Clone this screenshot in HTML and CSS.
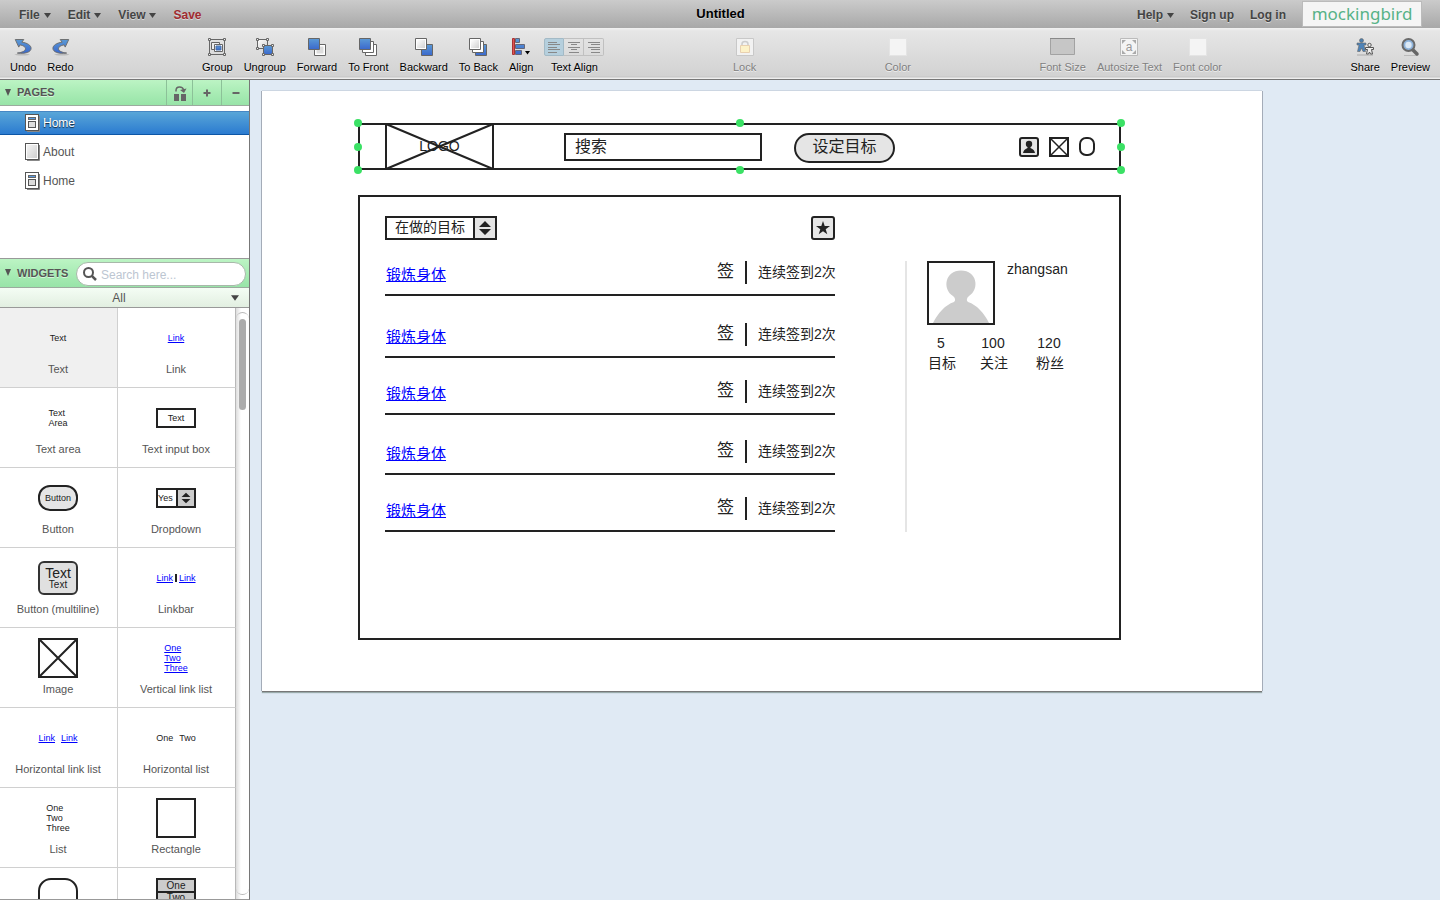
FILE: index.html
```html
<!DOCTYPE html>
<html lang="en">
<head>
<meta charset="utf-8">
<title>Untitled</title>
<link rel="stylesheet" href="styles.css">
</head>
<body>
<svg class="defs" width="0" height="0" aria-hidden="true">
  <defs>
    <linearGradient id="blue" x1="0" y1="0" x2="0" y2="1"><stop offset="0" stop-color="#5b9ad6"/><stop offset="1" stop-color="#3a68cc"/></linearGradient>
    <linearGradient id="pale" x1="0" y1="0" x2="1" y2="1"><stop offset="0" stop-color="#fff"/><stop offset="1" stop-color="#d2d2d2"/></linearGradient>
    <linearGradient id="sheet" x1="0" y1="0" x2="1" y2="1"><stop offset="0" stop-color="#f4f4f4"/><stop offset="1" stop-color="#cfcfcf"/></linearGradient>
  </defs>
  <symbol id="undo" viewBox="0 0 19 19">
    <ellipse cx="8" cy="17.5" rx="8" ry="1" fill="#999" opacity=".5"/>
    <path d="M.8 1.6H9.8L7.8 4.4C13.6 5.2 17.5 7.8 17.5 10.9 17.5 14.8 11.5 17 3 15.9 8.6 15.2 11.6 13.6 11.6 11.2 11.6 9.4 9.4 8 5.8 7.2L4.5 9.6Z" fill="url(#blue)" stroke="#6b6b6b" stroke-width="1"/>
  </symbol>
  <symbol id="page-filled" viewBox="0 0 16 18">
    <path d="M14.5 2V17.5H2" fill="none" stroke="#888" stroke-width="1"/>
    <rect x=".5" y=".5" width="13" height="16" fill="#fff" stroke="#555"/>
    <rect x="3" y="3" width="8" height="3" fill="#666"/><rect x="4" y="4" width="6" height="1" fill="#5b9ae0"/>
    <rect x="3.5" y="7.5" width="7" height="6" fill="#ddd" stroke="#555"/>
  </symbol>
  <symbol id="page-blank" viewBox="0 0 16 18">
    <path d="M14.5 2V17.5H2" fill="none" stroke="#888" stroke-width="1"/>
    <rect x=".5" y=".5" width="13" height="16" fill="#fff" stroke="#555"/>
    <rect x="2" y="2" width="10" height="13" fill="url(#sheet)"/>
  </symbol>
  <symbol id="caret" viewBox="0 0 7 5"><path d="M0 0H7L3.5 5Z"/></symbol>
  <symbol id="twist" viewBox="0 0 6 7"><path d="M0 0H6L3 7Z"/></symbol>
</svg>

<header class="menubar">
  <nav class="menus">
    <button class="menu">File<svg class="caret"><use href="#caret"/></svg></button>
    <button class="menu">Edit<svg class="caret"><use href="#caret"/></svg></button>
    <button class="menu">View<svg class="caret"><use href="#caret"/></svg></button>
    <button class="menu save">Save</button>
  </nav>
  <h1 class="doc-title">Untitled</h1>
  <nav class="account">
    <button class="menu">Help<svg class="caret"><use href="#caret"/></svg></button>
    <a class="menu" href="#">Sign up</a>
    <a class="menu" href="#">Log in</a>
    <a class="brand" href="#">mockingbird</a>
  </nav>
</header>

<div class="toolbar">
  <div class="tools">
    <button class="tool"><svg width="19" height="19"><use href="#undo"/></svg>Undo</button>
    <button class="tool"><svg width="19" height="19" viewBox="0 0 19 19"><g transform="translate(19 0) scale(-1 1)"><use href="#undo" width="19" height="19"/></g></svg>Redo</button>
  </div>
  <div class="tools">
    <button class="tool"><svg width="18" height="18" viewBox="0 0 18 18" fill="none" stroke="#666"><path d="M1.500 1.500H16.500V16.500H1.500Z"/><g fill="#eee"><path d="M.5 .5h2v2h-2zM15.500 .5h2v2h-2zM.5 15.500h2v2h-2zM15.500 15.500h2v2h-2z"/><path d="M3.500 4.500h8v7h-8z"/></g><path d="M6.500 6.500h8v7h-8z" fill="#fff"/><path d="M8 8h5v4H8z" fill="url(#blue)" stroke="#4a6ea8"/></svg>Group</button>
    <button class="tool"><svg width="18" height="18" viewBox="0 0 18 18" fill="none" stroke="#666"><path d="M1.500 1.500H11.500V10.500H1.500Z" fill="url(#pale)"/><path d="M7.500 7.500H16.500V16.500H7.500Z" fill="url(#blue)"/><path fill="#eee" d="M.5 .5h2v2h-2zM10.500 .5h2v2h-2zM.5 9.500h2v2h-2zM6.500 6.500h2v2h-2zM15.500 6.500h2v2h-2zM6.500 15.500h2v2h-2zM15.500 15.500h2v2h-2z"/></svg>Ungroup</button>
    <button class="tool"><svg width="18" height="18" viewBox="0 0 18 18" stroke="#666"><path d="M6.500 6.500h11v11h-11z" fill="#fff"/><path d="M8.500 8.500h7v7h-7z" fill="#ddd" stroke="none"/><path d="M.5 .5h11v11H.5z" fill="url(#blue)"/></svg>Forward</button>
    <button class="tool"><svg width="18" height="18" viewBox="0 0 18 18" stroke="#666"><path d="M6.500 6.500h11v11h-11z" fill="#fff"/><path d="M3.500 3.500h11v11h-11z" fill="#fff"/><path d="M.5 .5h11v11H.5z" fill="url(#blue)"/></svg>To Front</button>
    <button class="tool"><svg width="18" height="18" viewBox="0 0 18 18" stroke="#666"><path d="M6.500 6.500h11v11h-11z" fill="url(#blue)"/><path d="M.5 .5h11v11H.5z" fill="#fff"/><path d="M2 2h8v8H2z" fill="url(#pale)" stroke="none"/></svg>Backward</button>
    <button class="tool"><svg width="18" height="18" viewBox="0 0 18 18" stroke="#666"><path d="M6.500 6.500h11v11h-11z" fill="url(#blue)"/><path d="M3.500 3.500h11v11h-11z" fill="#fff"/><path d="M.5 .5h11v11H.5z" fill="#fff"/><path d="M2 2h8v8H2z" fill="url(#pale)" stroke="none"/></svg>To Back</button>
    <button class="tool"><svg width="18" height="18" viewBox="0 0 18 18"><g fill="url(#blue)" stroke="#667"><path d="M3.500 .5h4v4h-4zM3.500 6.500h9v4h-9zM3.500 12.500h6v4h-6z"/></g><path d="M.5 .5h2v16h-2z" fill="#d55" stroke="#a33"/><path d="M13 13h5l-2.500 3.500z"/></svg>Align</button>
    <div class="tool" role="group" aria-labelledby="text-align">
      <div class="segments">
        <button class="segment on" aria-label="Left"><svg width="12" height="11" viewBox="0 0 12 11"><path d="M0 .5h9M0 2.500h12M0 5.500h9M0 7.500h12M0 10.500h9"/></svg></button>
        <button class="segment" aria-label="Center"><svg width="12" height="11" viewBox="0 0 12 11"><path d="M0 .5h12M3 2.500h6M0 5.500h12M3 7.500h6M1 10.500h10"/></svg></button>
        <button class="segment" aria-label="Right"><svg width="12" height="11" viewBox="0 0 12 11"><path d="M0 .5h12M3 2.500h9M0 5.500h12M3 7.500h9M3 10.500h9"/></svg></button>
      </div>
      <span id="text-align">Text Align</span>
    </div>
  </div>
  <div class="tools">
    <button class="tool" disabled><svg width="18" height="18" viewBox="0 0 18 18"><path d="M.5 .5h17v17H.5z" fill="#f2f2f2" stroke="#c8c8c8"/><path d="M6 8V6Q6 3.500 9 3.500T12 6V8" fill="none" stroke="#ccc" stroke-width="1.500"/><path d="M4.500 7.500h9v7h-9z" fill="#fdf2c8" stroke="#e8d0b0"/></svg>Lock</button>
  </div>
  <div class="tools">
    <button class="tool" disabled><svg width="18" height="18" viewBox="0 0 18 18"><path d="M.5 .5h17v17H.5z" fill="#f4f4f4" stroke="#e4e4e4"/></svg>Color</button>
  </div>
  <div class="tools">
    <button class="tool" disabled><svg width="25" height="18" viewBox="0 0 25 18"><path d="M.5 .5h24v16H.5z" fill="#c6c6c6" stroke="#a2a2a2"/><path d="M0 .5h25" stroke="#888"/></svg>Font Size</button>
    <button class="tool" disabled><svg width="18" height="18" viewBox="0 0 18 18"><path d="M.5 .5h17v17H.5z" fill="#f4f4f4" stroke="#bbb"/><path d="M2 2h4L2 6zM16 2h-4l4 4zM2 16h4l-4-4zM16 16h-4l4-4z" fill="#aaa"/><text class="glyph" x="9" y="13" text-anchor="middle">a</text></svg>Autosize Text</button>
    <button class="tool" disabled><svg width="18" height="18" viewBox="0 0 18 18"><path d="M.5 .5h17v17H.5z" fill="#f4f4f4" stroke="#e4e4e4"/></svg>Font color</button>
  </div>
  <div class="tools">
    <button class="tool"><svg width="18" height="18" viewBox="0 0 18 18"><path d="M1 17h16" stroke="#aaa"/><circle cx="5.500" cy="2.500" r="2" fill="#4d7fae" stroke="#666" stroke-width=".6"/><path d="M1 5h9v2H8l1.500 6.500H7L5.500 10 4 13.500H1.500L3 7H1z" fill="#4d83b8" stroke="#666" stroke-width=".6"/><g fill="#eee" stroke="#555"><circle cx="13.500" cy="7" r="1.700"/><path d="M9.500 9.500h8v2h-2l1 4.500h-2l-1-2-1 2h-2l1-4.500h-2z"/></g></svg>Share</button>
    <button class="tool"><svg width="18" height="18" viewBox="0 0 18 18"><path d="M3 17.500h13" stroke="#bbb"/><path d="M11.500 11.500L16 16" stroke="#666" stroke-width="3.500" stroke-linecap="round"/><circle cx="7.500" cy="7" r="6" fill="#8fb4dc" stroke="#6a6a6a" stroke-width="2"/><circle cx="7.500" cy="7" r="3.200" fill="#dce9f6"/></svg>Preview</button>
  </div>
</div>

<div class="workspace">
  <aside class="sidebar">
    <section class="pages">
      <div class="panel-head">
        <h2 class="panel-title"><svg class="twist"><use href="#twist"/></svg>PAGES</h2>
        <button class="head-button" aria-label="Move page"><svg width="14" height="16" viewBox="0 0 14 16" fill="#666"><path d="M1 9h5v7H1zM8 9h5v7H8z"/><path d="M3 6.500V5.500Q3 2 6.500 2 10 2 10.500 5" fill="none" stroke="#666" stroke-width="1.500"/><path d="M7 5L13.500 3.500 11 8z"/></svg></button>
        <button class="head-button add" aria-label="Add page"><svg width="8" height="8" viewBox="0 0 8 8"><path d="M4 .5V7.500M.5 4H7.500" stroke="#666" stroke-width="2"/></svg></button>
        <button class="head-button remove" aria-label="Remove page"><svg width="8" height="8" viewBox="0 0 8 8"><path d="M.5 4H7.500" stroke="#666" stroke-width="2"/></svg></button>
      </div>
      <ul class="page-list">
        <li><a class="page selected" href="#"><svg width="16" height="18"><use href="#page-filled"/></svg>Home</a></li>
        <li><a class="page" href="#"><svg width="16" height="18"><use href="#page-blank"/></svg>About</a></li>
        <li><a class="page" href="#"><svg width="16" height="18"><use href="#page-filled"/></svg>Home</a></li>
      </ul>
    </section>
    <section class="widgets">
      <div class="panel-head search-head">
        <h2 class="panel-title"><svg class="twist"><use href="#twist"/></svg>WIDGETS</h2>
        <label class="search"><svg width="15" height="15" viewBox="0 0 15 15" fill="none" stroke="#555"><circle cx="5.500" cy="5.500" r="4.500" stroke-width="2"/><path d="M8.800 8.800L13 13" stroke-width="2.500"/></svg><input type="search" placeholder="Search here..." aria-label="Search widgets"></label>
      </div>
      <button class="filter"><span>All</span><svg class="caret"><use href="#caret"/></svg></button>
      <div class="library">
        <ul class="grid">
          <li class="cell current"><div class="thumb">Text</div>Text</li>
          <li class="cell"><div class="thumb"><a href="#">Link</a></div>Link</li>
          <li class="cell"><div class="thumb"><p>Text<br>Area</p></div>Text area</li>
          <li class="cell"><div class="thumb"><input class="mini-input" value="Text" aria-label="Text input box" readonly></div>Text input box</li>
          <li class="cell"><div class="thumb"><button class="mini-button">Button</button></div>Button</li>
          <li class="cell"><div class="thumb"><div class="mini-select"><select aria-label="Dropdown"><option>Yes</option></select><svg width="18" height="16" viewBox="0 0 18 16"><path d="M4 7h10L9 2zM4 9h10l-5 5z"/></svg></div></div>Dropdown</li>
          <li class="cell"><div class="thumb"><button class="mini-multi"><span>Text</span><small>Text</small></button></div>Button (multiline)</li>
          <li class="cell"><div class="thumb linkbar"><a href="#">Link</a><i></i><a href="#">Link</a></div>Linkbar</li>
          <li class="cell"><div class="thumb"><svg width="40" height="40" viewBox="0 0 40 40" fill="none" stroke="#222" stroke-width="2"><path d="M1 1H39V39H1ZM1 1L39 39M39 1L1 39"/></svg></div>Image</li>
          <li class="cell"><div class="thumb"><p><a href="#">One</a><br><a href="#">Two</a><br><a href="#">Three</a></p></div>Vertical link list</li>
          <li class="cell"><div class="thumb spaced"><a href="#">Link</a><a href="#">Link</a></div>Horizontal link list</li>
          <li class="cell"><div class="thumb spaced"><span>One</span><span>Two</span></div>Horizontal list</li>
          <li class="cell"><div class="thumb"><p>One<br>Two<br>Three</p></div>List</li>
          <li class="cell"><div class="thumb"><div class="mini-rect"></div></div>Rectangle</li>
          <li class="cell"><div class="thumb"><div class="mini-rect round"></div></div></li>
          <li class="cell"><div class="thumb"><div class="mini-menu"><span>One</span><span>Two</span></div></div></li>
        </ul>
        <div class="scrollbar"><div class="track"><div class="thumb-bar"></div></div></div>
      </div>
    </section>
  </aside>

  <main class="canvas">
    <article class="paper">
      <div class="frame topbar">
        <div class="logo"><svg viewBox="0 0 109 47" preserveAspectRatio="none"><path d="M1 1H108V46H1ZM1 1L108 46M108 1L1 46"/></svg>LOGO</div>
        <input class="wire-search" value="搜索" aria-label="搜索">
        <button class="wire-button">设定目标</button>
        <div class="glyphs">
          <svg width="20" height="20" viewBox="0 0 20 20"><rect x="1" y="1" width="18" height="18" rx="2" fill="#e5e5e5" stroke="#222" stroke-width="2"/><circle cx="10" cy="7" r="3.200" fill="#222"/><path d="M8.500 9H11.500V11Q15.500 12.500 16 16H4Q4.500 12.500 8.500 11Z" fill="#222"/></svg>
          <svg width="20" height="20" viewBox="0 0 20 20" fill="none" stroke="#222" stroke-width="2"><path d="M1 1H19V19H1Z"/><path d="M1 1L19 19M19 1L1 19" stroke-width="1.500"/></svg>
          <div class="pill"></div>
        </div>
        <i class="handle h-left v-top"></i><i class="handle h-mid v-top"></i><i class="handle h-right v-top"></i>
        <i class="handle h-left v-mid"></i><i class="handle h-right v-mid"></i>
        <i class="handle h-left v-bottom"></i><i class="handle h-mid v-bottom"></i><i class="handle h-right v-bottom"></i>
      </div>
      <div class="frame board">
        <div class="board-head">
          <div class="wire-select"><select aria-label="目标"><option>在做的目标</option></select><svg width="20" height="20" viewBox="0 0 20 20"><path d="M4 9H16L10 3ZM4 11H16L10 17Z"/></svg></div>
          <button class="star" aria-label="收藏"><svg width="14" height="14" viewBox="0 0 14 14" fill="#222"><path d="M7 0L8.700 5H14L9.700 8.200 11.300 13.300 7 10.200 2.700 13.300 4.300 8.200 0 5H5.300Z"/></svg></button>
        </div>
        <div class="board-body">
          <ul class="goals">
            <li class="goal"><a href="#">锻炼身体</a><span class="sign">签</span><span class="streak">连续签到2次</span></li>
            <li class="goal"><a href="#">锻炼身体</a><span class="sign">签</span><span class="streak">连续签到2次</span></li>
            <li class="goal"><a href="#">锻炼身体</a><span class="sign">签</span><span class="streak">连续签到2次</span></li>
            <li class="goal"><a href="#">锻炼身体</a><span class="sign">签</span><span class="streak">连续签到2次</span></li>
            <li class="goal"><a href="#">锻炼身体</a><span class="sign">签</span><span class="streak">连续签到2次</span></li>
          </ul>
          <div class="profile">
            <div class="person">
              <svg class="avatar" viewBox="0 0 64 60"><path d="M4 60C9 50 16 42 25 39 27 37.500 26 34.500 24 33 13 26 16 7.500 32 7.500 48 7.500 51 26 40 33 38 34.500 37 37.500 39 39 48 42 55 50 60 60Z" fill="#ccc"/></svg>
              <span>zhangsan</span>
            </div>
            <dl class="stats">
              <div><dd>5</dd><dt>目标</dt></div>
              <div><dd>100</dd><dt>关注</dt></div>
              <div class="last"><dd>120</dd><dt>粉丝</dt></div>
            </dl>
          </div>
        </div>
      </div>
    </article>
  </main>
</div>
</body>
</html>
```
FILE: styles.css
```css
* { box-sizing: border-box; }

body {
  margin: 0;
  height: 100vh;
  display: flex;
  flex-direction: column;
  overflow: hidden;
  font-family: "Liberation Sans", "Noto Sans CJK SC", sans-serif;
  font-size: 12px;
  color: #222;
}

button, input, select { font: inherit; color: inherit; margin: 0; padding: 0; border: 0; background: none; border-radius: 0; }
select { appearance: none; }
ul, dl, dd, h1, h2, p { margin: 0; padding: 0; }
ul { list-style: none; }
svg { display: block; flex: none; }
.defs { position: absolute; }
.caret { width: 7px; height: 5px; fill: #444; }

/* Menu bar */
.menubar {
  flex: none;
  height: 28px;
  display: grid;
  grid-template-columns: 1fr auto 1fr;
  align-items: center;
  padding: 0 18px 0 19px;
  background: linear-gradient(#cbcbcb, #a8a8a8);
}
.menus, .account { display: flex; align-items: center; gap: 17px; }
.account { justify-content: flex-end; gap: 16px; }
.menu {
  display: flex;
  align-items: center;
  gap: 4px;
  padding-top: 2px;
  line-height: 26px;
  font-weight: bold;
  color: #444;
  text-decoration: none;
  text-shadow: 0 1px 0 #d8d8d8;
}
.save { color: #a02b30; }
.doc-title { font-size: 13px; line-height: 28px; color: #000; text-shadow: 0 1px 0 #d8d8d8; }
.brand {
  width: 120px;
  height: 26px;
  border: 1px solid #bbb;
  background: #f5f5f5;
  font: 17px/24px "Noto Sans", sans-serif;
  text-align: center;
  color: #57b287;
  text-decoration: none;
}

/* Toolbar */
.toolbar {
  flex: none;
  height: 52px;
  display: flex;
  justify-content: space-between;
  padding: 9px 10px 0;
  background: linear-gradient(#f2f2f2, #e6e6e6 3px, #d2d2d2 48px, #c4c4c4 49px, #eee 50px);
  border-bottom: 1px solid #777;
}
.tools { display: flex; align-items: flex-start; gap: 11px; }
.tool {
  display: flex;
  flex-direction: column;
  align-items: center;
  gap: 4px;
  font-size: 11px;
  line-height: 14px;
  color: #000;
  text-shadow: 0 1px 0 #eee;
}
.tool > svg { padding-top: 1px; height: 19px; overflow: visible; }
.tool:disabled { color: #808080; }
.glyph { font-family: "Liberation Sans", sans-serif; font-size: 12px; fill: #999; text-shadow: none; }
.segments { display: flex; height: 19px; padding-top: 1px; }
.segment {
  width: 20px;
  height: 18px;
  display: grid;
  place-items: center;
  border: 1px solid #c0c0c0;
  border-left-width: 0;
}
.segment:first-child { border-left-width: 1px; border-radius: 2px 0 0 2px; }
.segment:last-child { border-radius: 0 2px 2px 0; }
.segment path { stroke: #888; stroke-width: 1; }
.segment.on { background: #b5cfdd; border-color: #a3bac6; }

/* Sidebar */
.workspace { flex: 1; min-height: 0; display: flex; }
.sidebar {
  flex: none;
  width: 250px;
  display: flex;
  flex-direction: column;
  border-right: 1px solid #777;
  border-bottom: 1px solid #999;
  background: #fff;
}
.panel-head {
  height: 26px;
  display: flex;
  align-items: stretch;
  background: linear-gradient(#bcf4c4, #a9ecb5 50%, #98e4a8);
  border-bottom: 1px solid #9bab9e;
}
.panel-title {
  flex: 1;
  display: flex;
  align-items: center;
  gap: 6px;
  padding: 0 0 1px 5px;
  font-size: 11px;
  color: #555;
  text-shadow: 0 1px 0 #d5f7da;
}
.twist { width: 6px; height: 7px; fill: #555; }
.head-button { width: 26px; display: grid; place-items: center; border-left: 1px solid #8cc198; }
.head-button.add { width: 29px; }
.head-button.remove { width: 28px; }
.page-list { height: 152px; padding-top: 5px; display: flex; flex-direction: column; gap: 5px; }
.page {
  height: 24px;
  display: flex;
  align-items: center;
  gap: 2px;
  padding-left: 25px;
  color: #555;
  text-decoration: none;
}
.page.selected {
  color: #fff;
  background: linear-gradient(#59a6d8, #2b7bd0);
  border-top: 1px solid #4687c4;
  border-bottom: 1px solid #0d56a6;
  text-shadow: 0 1px 1px #123;
}
.widgets { flex: 1; min-height: 0; display: flex; flex-direction: column; border-top: 1px solid #999; }
.search-head { flex: none; height: 29px; }
.search {
  width: 170px;
  height: 24px;
  margin: 3px 3px 1px;
  padding: 0 8px 0 6px;
  display: flex;
  align-items: center;
  gap: 3px;
  border: 1px solid #a8b8aa;
  border-radius: 12px;
  background: #fff;
}
.search input { flex: 1; min-width: 0; padding-top: 1px; outline: 0; }
.search input::placeholder { color: #bcc6d2; opacity: 1; }
.filter {
  flex: none;
  height: 20px;
  display: flex;
  align-items: center;
  padding: 0 10px 0 7px;
  background: linear-gradient(#f4fdf4, #e2efe1);
  border-bottom: 1px solid #999;
  color: #555;
}
.filter span { flex: 1; }
.filter .caret { width: 8px; height: 6px; }
.library { flex: 1; min-height: 0; display: flex; overflow: hidden; }
.grid { flex: 1; display: grid; grid-template-columns: 1fr 1fr; grid-auto-rows: 80px; }
.cell {
  display: flex;
  flex-direction: column;
  align-items: center;
  padding: 10px 1px 0 0;
  border-right: 1px solid #d0d0d0;
  border-bottom: 1px solid #d0d0d0;
  font-size: 11px;
  line-height: 22px;
  color: #555;
}
.cell:nth-child(even) { border-right-color: #b8b8b8; }
.current { background: #f0f0f0; }
.thumb {
  height: 40px;
  display: flex;
  align-items: center;
  font-size: 9px;
  line-height: 10px;
  color: #222;
}
.thumb a { color: #00f; }
.spaced { gap: 6px; }
.linkbar { gap: 2px; }
.linkbar i { width: 2px; height: 8px; background: #222; }
.mini-input { width: 40px; height: 20px; border: 2px solid #222; text-align: center; }
.mini-button { width: 40px; height: 26px; border: 2px solid #222; border-radius: 12px; background: #e5e5e5; }
.mini-select { width: 40px; height: 20px; display: flex; border: 2px solid #222; }
.mini-select select { flex: 1; min-width: 0; }
.mini-select svg { border-left: 2px solid #222; background: #ccc; fill: #222; }
.mini-multi {
  width: 40px;
  height: 34px;
  display: flex;
  flex-direction: column;
  align-items: center;
  justify-content: center;
  border: 2px solid #333;
  border-radius: 6px;
  background: #e0e0e0;
  font-size: 14px;
  line-height: 14px;
}
.mini-multi small { font-size: 10px; line-height: 10px; }
.mini-rect { width: 40px; height: 40px; border: 2px solid #222; }
.mini-rect.round { border-radius: 13px; }
.mini-menu { width: 40px; height: 40px; border: 2px solid #222; background: #ccc; font-size: 10px; text-align: center; overflow: hidden; }
.mini-menu span { display: block; line-height: 11px; }
.mini-menu span + span { border-top: 2px solid #222; line-height: 9px; }
.scrollbar { width: 13px; padding: 4px 0; background: linear-gradient(90deg, #ddd, #fff 5px); }
.track { height: 100%; padding: 6px 3px; border: 1px solid #b8b8b8; border-width: 1px 0; border-radius: 7px; background: linear-gradient(90deg, #ddd, #fff 5px); }
.thumb-bar { height: 91px; border-radius: 4px; background: #acacac; }

/* Canvas */
.canvas { flex: 1; min-width: 0; overflow: hidden; padding: 11px 12px; background: #e0eaf4; }
.paper {
  width: 1000px;
  min-height: 600px;
  padding: 32px 96px 51px;
  background: #fff;
  box-shadow: 0 1px 0 #777, 1px 0 0 #a4acb8, -1px 0 0 #a4acb8, 0 -1px 0 #ccd6e2, 0 2px 1px #9aa;
}
.frame { width: 763px; border: 2px solid #222; }
.topbar { position: relative; height: 47px; display: flex; padding: 0 24px 0 25px; }
.logo {
  position: relative;
  width: 109px;
  display: grid;
  place-items: center;
  padding-bottom: 2px;
  font-size: 14px;
}
.logo svg { position: absolute; inset: -2px 0; width: 100%; height: 47px; fill: none; stroke: #222; stroke-width: 2; }
.wire-search { width: 198px; height: 28px; margin: 8px 32px 0 70px; padding: 0 9px 5px; border: 2px solid #222; font-size: 16px; }
.wire-button { width: 101px; height: 30px; margin-top: 8px; padding-bottom: 2px; border: 2px solid #222; border-radius: 15px; background: #e5e5e5; font-size: 16px; line-height: 20px; }
.glyphs { display: flex; gap: 10px; margin: 12px 0 0 auto; }
.pill { width: 16px; height: 19px; border: 2px solid #222; border-radius: 7px; }
.handle { position: absolute; width: 8px; height: 8px; margin: -4px; border-radius: 50%; background: #3be165; }
.h-left { left: -2px; }
.h-mid { left: 50%; }
.h-right { left: calc(100% + 2px); }
.v-top { top: -2px; }
.v-mid { top: 50%; }
.v-bottom { top: calc(100% + 2px); }

.board { min-height: 445px; margin-top: 25px; padding: 19px 25px; }
.board-head { width: 450px; display: flex; justify-content: space-between; }
.wire-select { width: 112px; height: 24px; display: flex; border: 2px solid #222; font-size: 14px; }
.wire-select select { flex: 1; min-width: 0; padding: 0 0 2px 8px; }
.wire-select svg { width: 22px; border-left: 2px solid #222; background: #e5e5e5; fill: #222; }
.star { width: 24px; height: 24px; display: grid; place-items: center; border: 2px solid #222; border-radius: 3px; background: #e5e5e5; }
.board-body { display: flex; align-items: flex-start; gap: 70px; margin-top: 21px; }
.goals { width: 450px; }
.goal { height: 35px; display: flex; border-bottom: 2px solid #222; margin-bottom: 22px; }
.goal:first-child { margin-bottom: 27px; }
.goal:nth-child(3) { margin-bottom: 25px; }
.goal:last-child { margin-bottom: 0; }
.goal a { flex: 1; padding-left: 1px; font-size: 15px; line-height: 27px; color: #00f; }
.sign { width: 30px; height: 23px; border-right: 2px solid #222; font-size: 17px; line-height: 21px; }
.streak { width: 88px; padding-left: 11px; font-size: 14px; line-height: 23px; white-space: nowrap; }
.profile { flex: 1; min-height: 271px; padding-left: 20px; border-left: 2px solid #e5e5e5; }
.person { display: flex; gap: 12px; font-size: 14px; line-height: 16px; }
.avatar { width: 68px; height: 64px; border: 2px solid #222; }
.stats { display: flex; gap: 24px; padding: 8px 0 0 1px; font-size: 14px; line-height: 20px; text-align: center; }
.stats dd { padding-right: 2px; }
.stats .last { margin-left: 4px; }
```
